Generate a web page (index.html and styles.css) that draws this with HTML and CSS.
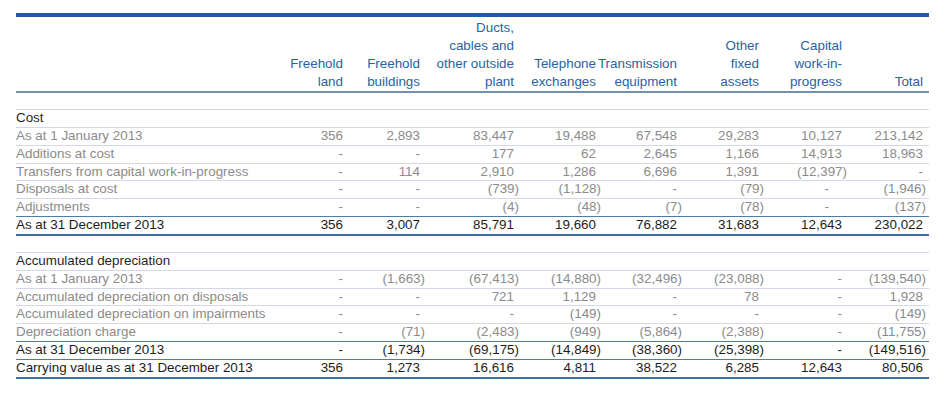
FILE: index.html
```html
<!DOCTYPE html>
<html>
<head>
<meta charset="utf-8">
<link rel="stylesheet" href="styles.css">
</head>
<body>
<table class="fin">
  <colgroup>
    <col class="c-lbl"><col class="c-land"><col class="c-bld"><col class="c-duct"><col class="c-tel"><col class="c-trn"><col class="c-oth"><col class="c-cap"><col class="c-tot">
  </colgroup>
  <thead>
    <tr>
      <th class="lbl"></th>
      <th>Freehold<br>land</th>
      <th>Freehold<br>buildings</th>
      <th>Ducts,<br>cables and<br>other outside<br>plant</th>
      <th>Telephone<br>exchanges</th>
      <th>Transmission<br>equipment</th>
      <th>Other<br>fixed<br>assets</th>
      <th>Capital<br>work-in-<br>progress</th>
      <th class="last">Total</th>
    </tr>
  </thead>
  <tbody>
    <tr class="spacer"><td colspan="9"></td></tr>
    <tr class="sec"><td class="lbl">Cost</td><td></td><td></td><td></td><td></td><td></td><td></td><td></td><td class="last"></td></tr>
    <tr><td class="lbl">As at 1 January 2013</td><td>356</td><td>2,893</td><td>83,447</td><td>19,488</td><td>67,548</td><td>29,283</td><td>10,127</td><td class="last">213,142</td></tr>
    <tr><td class="lbl">Additions at cost</td><td>-</td><td>-</td><td>177</td><td>62</td><td>2,645</td><td>1,166</td><td>14,913</td><td class="last">18,963</td></tr>
    <tr><td class="lbl">Transfers from capital work-in-progress</td><td>-</td><td>114</td><td>2,910</td><td>1,286</td><td>6,696</td><td>1,391</td><td>(12,397<i>)</i></td><td class="last">-</td></tr>
    <tr><td class="lbl">Disposals at cost</td><td>-</td><td>-</td><td>(739<i>)</i></td><td>(1,128<i>)</i></td><td>-</td><td>(79<i>)</i></td><td><b class="d">-</b></td><td class="last">(1,946<i>)</i></td></tr>
    <tr class="pre"><td class="lbl">Adjustments</td><td>-</td><td>-</td><td>(4<i>)</i></td><td>(48<i>)</i></td><td>(7<i>)</i></td><td>(78<i>)</i></td><td><b class="d">-</b></td><td class="last">(137<i>)</i></td></tr>
    <tr class="tot thick"><td class="lbl">As at 31 December 2013</td><td>356</td><td>3,007</td><td>85,791</td><td>19,660</td><td>76,882</td><td>31,683</td><td>12,643</td><td class="last">230,022</td></tr>
    <tr class="spacer2"><td colspan="9"></td></tr>
    <tr class="sec"><td class="lbl">Accumulated depreciation</td><td></td><td></td><td></td><td></td><td></td><td></td><td></td><td class="last"></td></tr>
    <tr><td class="lbl">As at 1 January 2013</td><td>-</td><td>(1,663<i>)</i></td><td>(67,413<i>)</i></td><td>(14,880<i>)</i></td><td>(32,496<i>)</i></td><td>(23,088<i>)</i></td><td>-</td><td class="last">(139,540<i>)</i></td></tr>
    <tr><td class="lbl">Accumulated depreciation on disposals</td><td>-</td><td>-</td><td>721</td><td>1,129</td><td>-</td><td>78</td><td>-</td><td class="last">1,928</td></tr>
    <tr><td class="lbl">Accumulated depreciation on impairments</td><td>-</td><td>-</td><td>-</td><td>(149<i>)</i></td><td>-</td><td>-</td><td>-</td><td class="last">(149<i>)</i></td></tr>
    <tr class="pre"><td class="lbl">Depreciation charge</td><td>-</td><td>(71<i>)</i></td><td>(2,483<i>)</i></td><td>(949<i>)</i></td><td>(5,864<i>)</i></td><td>(2,388<i>)</i></td><td>-</td><td class="last">(11,755<i>)</i></td></tr>
    <tr class="tot"><td class="lbl">As at 31 December 2013</td><td>-</td><td>(1,734<i>)</i></td><td>(69,175<i>)</i></td><td>(14,849<i>)</i></td><td>(38,360<i>)</i></td><td>(25,398<i>)</i></td><td>-</td><td class="last">(149,516<i>)</i></td></tr>
    <tr class="tot thick"><td class="lbl">Carrying value as at 31 December 2013</td><td>356</td><td>1,273</td><td>16,616</td><td>4,811</td><td>38,522</td><td>6,285</td><td>12,643</td><td class="last">80,506</td></tr>
  </tbody>
</table>
</body>
</html>
```

FILE: styles.css
```css
html, body {
  margin: 0;
  padding: 0;
  background: #ffffff;
}

body {
  font-family: "Liberation Sans", Arial, sans-serif;
  font-size: 13.4px;
}

.fin {
  margin: 13px 0 0 16px;
  width: 913px;
  table-layout: fixed;
  border-collapse: separate;
  border-spacing: 0;
}

.c-lbl { width: 264px; }
.c-land { width: 63px; }
.c-bld { width: 77px; }
.c-duct { width: 94px; }
.c-tel { width: 82px; }
.c-trn { width: 81px; }
.c-oth { width: 82px; }
.c-cap { width: 83px; }
.c-tot { width: 87px; }

.fin th {
  border-top: 4px solid #1d5ca4;
  border-bottom: 2px solid #7391ad;
  color: #2a62a0;
  font-weight: normal;
  text-align: right;
  vertical-align: bottom;
  line-height: 18px;
  padding: 2px 0 0 0;
  white-space: nowrap;
}

.fin td {
  padding: 0;
  line-height: 16.85px;
  text-align: right;
  white-space: nowrap;
  color: #8b8b8b;
  border-bottom: 1px solid #d3d8e6;
}

.fin th.last,
.fin td.last {
  padding-right: 6px;
}

.fin td.lbl,
.fin th.lbl {
  text-align: left;
}

.fin td i {
  font-style: normal;
  margin-right: -5px;
}

.fin td.last i {
  margin-right: -3px;
}

.fin td b.d {
  font-weight: normal;
  margin-right: 13px;
}

.fin .spacer td {
  height: 16px;
  line-height: 16px;
}

.fin .spacer2 td {
  height: 16px;
  line-height: 16px;
  border-bottom: 1px solid #d3d8e6;
}

.fin .sec td {
  color: #1f1f1f;
}

.fin .pre td {
  border-bottom: 1px solid #4f7ca6;
}

.fin .tot td {
  color: #1c1c1c;
  border-bottom: 1px solid #4f7ca6;
}

.fin .tot.thick td {
  border-bottom: 2px solid #3f6f9e;
}
```
